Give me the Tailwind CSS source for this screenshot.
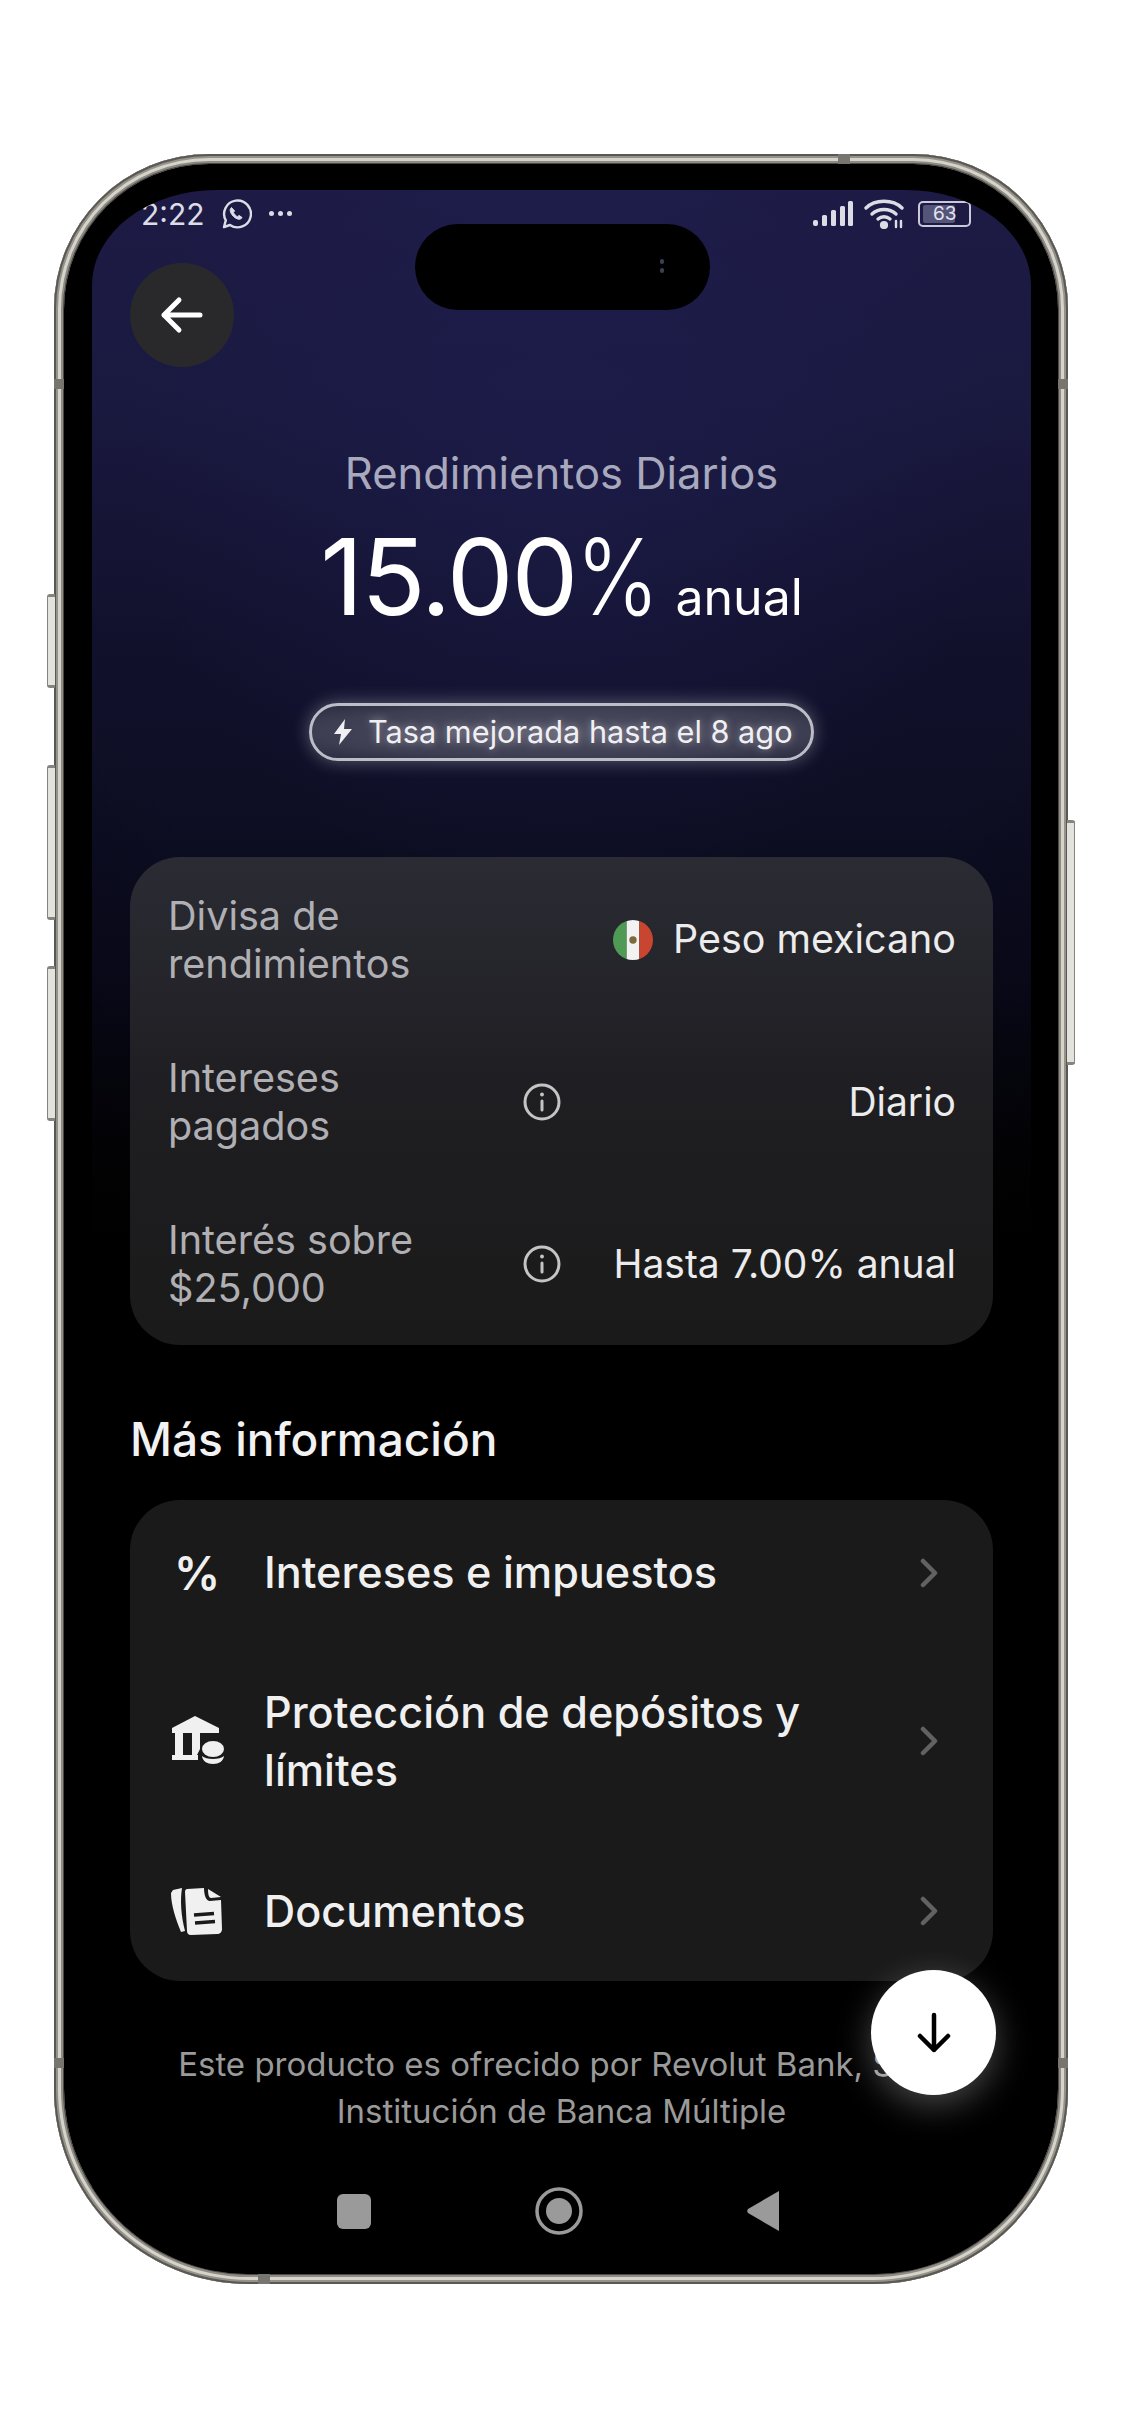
<!DOCTYPE html>
<html lang="es">

<head>
    <meta charset="UTF-8" />
    <meta name="viewport" content="width=device-width, initial-scale=1.0" />
    <title>Rendimientos Diarios</title>
    <script src="https://cdn.jsdelivr.net/npm/@tailwindcss/browser@4"></script>
</head>

<body class="bg-white font-['Inter','Noto_Sans',sans-serif]">
    <div class="w-[1125px] h-[2436px] pt-[154px] pl-[54px] overflow-hidden">
        <!-- Phone frame -->
        <div class="relative w-[1014px] h-[2130px] rounded-t-[155px] rounded-b-[195px] bg-[#d2cfc7] p-[10px] shadow-[inset_0_0_0_2px_#5a5853,inset_0_0_0_4px_#94928a,inset_0_0_0_7px_#d6d3cb,inset_0_0_0_9px_#8d8b83,inset_0_0_0_10px_#4a4945]">
            <!-- Side buttons -->
            <div class="absolute left-[-7px] top-[440px] w-[8px] h-[94px] rounded-l-[3px] bg-[#e4e2dc] border-l border-y-[3px] border-[#85837d]"></div>
            <div class="absolute left-[-7px] top-[611px] w-[8px] h-[155px] rounded-l-[3px] bg-[#e4e2dc] border-l border-y-[3px] border-[#85837d]"></div>
            <div class="absolute left-[-7px] top-[812px] w-[8px] h-[155px] rounded-l-[3px] bg-[#e4e2dc] border-l border-y-[3px] border-[#85837d]"></div>
            <div class="absolute right-[-7px] top-[666px] w-[8px] h-[245px] rounded-r-[3px] bg-[#e4e2dc] border-r border-y-[3px] border-[#85837d]"></div>

            <!-- Bezel -->
            <div class="relative w-full h-full rounded-t-[145px] rounded-b-[185px] bg-black px-[28px] pt-[26px] overflow-hidden">
                <!-- Screen -->
                <div class="relative w-[939px] h-[2084px] rounded-t-[125px_95px] overflow-hidden px-[38px] bg-[radial-gradient(ellipse_620px_640px_at_50%_260px,rgba(32,31,82,0.55)_0%,rgba(0,0,0,0)_70%),radial-gradient(ellipse_900px_900px_at_50%_300px,rgba(0,0,0,0)_55%,rgba(0,0,0,0.3)_100%),linear-gradient(180deg,#1d1b45_0px,#1a1940_200px,#12112d_440px,#0e0e24_620px,#09091a_800px,#030306_960px,#000_1050px,#000_100%)]">

                    <!-- Status bar -->
                    <div class="h-[47px] flex items-center justify-between text-[#dcdce6]">
                        <div class="flex items-center ml-[11px]">
                            <span class="text-[30px] leading-none">2:22</span>
                            <svg class="ml-[15px] w-[32px] h-[32px]" viewBox="0 0 32 32" fill="none" stroke="currentColor" stroke-width="2.4">
                                <path d="M4 29l1.8-6.6A13.4 13.4 0 1 1 10 27z" stroke-linejoin="round" />
                                <path d="M11.5 9.5c-1.5 1-1.8 3-.6 5.400 1.400 2.800 3.800 5 6.400 6 2.200.8 4 .2 4.800-1.300l-3-2.200-1.500 1.300c-1.700-.7-3.400-2.400-4.200-4.300l1.200-1.500z" fill="currentColor" stroke-width="1" />
                            </svg>
                            <div class="ml-[17px] flex gap-[4px]">
                                <span class="w-[5px] h-[5px] rounded-full bg-[#dcdce6]"></span>
                                <span class="w-[5px] h-[5px] rounded-full bg-[#dcdce6]"></span>
                                <span class="w-[5px] h-[5px] rounded-full bg-[#dcdce6]"></span>
                            </div>
                        </div>
                        <div class="flex items-center mr-[22px]">
                            <svg class="w-[40px] h-[26px]" viewBox="0 0 40 26" fill="currentColor">
                                <rect x="0" y="19" width="5" height="6" rx="2" />
                                <rect x="9" y="14" width="5" height="11" rx="1.500" />
                                <rect x="18" y="9" width="5" height="16" rx="1.500" />
                                <rect x="27" y="5" width="5" height="20" rx="1.500" />
                                <rect x="35" y="0" width="5" height="25" rx="1.500" />
                            </svg>
                            <svg class="ml-[11px] w-[40px] h-[30px]" viewBox="0 0 40 30" fill="none" stroke="currentColor" stroke-width="3.400" stroke-linecap="round">
                                <path d="M2 9C11 0 29 0 38 9" />
                                <path d="M8 15c6.500-6 17.500-6 24 0" />
                                <path d="M14 20c3.500-3 8.500-3 12 0" />
                                <circle cx="20" cy="26" r="2.400" fill="currentColor" />
                                <path d="M32 22v6M37 22v6" stroke-width="2.400" />
                            </svg>
                            <div class="ml-[14px] relative w-[53px] h-[26px] rounded-[5px] border-2 border-[#c9c9d8] flex items-center">
                                <div class="absolute left-[3px] top-[2px] bottom-[2px] w-[32px] bg-[#55557a] rounded-[2px]"></div>
                                <span class="relative ml-[13px] text-[19px] leading-none text-[#e4e4ee]">63</span>
                            </div>
                        </div>
                    </div>

                    <!-- Back -->
                    <button type="button" class="mt-[26px] w-[104px] h-[104px] rounded-full bg-[#29292c] flex items-center justify-center">
                        <svg class="w-[44px] h-[38px]" viewBox="0 0 44 38" fill="none" stroke="white" stroke-width="5" stroke-linecap="round" stroke-linejoin="round">
                            <path d="M4 19h36M19 4L4 19l15 15" />
                        </svg>
                    </button>

                    <!-- Camera island -->
                    <div class="absolute left-[323px] top-[34px] w-[295px] h-[86px] rounded-full bg-black">
                        <div class="absolute left-[245px] top-[35px] flex flex-col gap-[4px]">
                            <span class="w-[4px] h-[5px] rounded-full bg-[#3c4150]"></span>
                            <span class="w-[4px] h-[5px] rounded-full bg-[#3c4150]"></span>
                        </div>
                    </div>

                    <!-- Rate header -->
                    <div class="mt-[82px] text-center text-[43.500px] leading-[48px] text-[#a9a9bd] whitespace-nowrap">Rendimientos Diarios</div>
                    <div class="mt-[20px] h-[120px] flex items-baseline justify-center text-white">
                        <span class="text-[106px] leading-[120px] tracking-[-2px]">15.00</span>
                        <span class="w-[72px] text-[106px] leading-[120px] font-[350] origin-left scale-x-[0.84]">%</span>
                        <span class="ml-[27px] text-[50px] leading-none">anual</span>
                    </div>
                    <div class="mt-[66px] flex justify-center">
                        <div class="h-[58px] w-[505px] rounded-full border-[3px] border-[#bdbdc8] bg-[radial-gradient(ellipse_at_center,#505064_0%,#3e3e52_70%,#2c2c42_100%)] shadow-[0_0_18px_rgba(255,255,255,0.32)] flex items-center pl-[21px] text-[30.700px] text-[#f0f0f4] [text-shadow:0_0_8px_rgba(255,255,255,0.45)]">
                            <svg class="w-[20px] h-[26px] shrink-0" viewBox="0 0 20 26" fill="currentColor">
                                <path d="M12 0L1 15h7l-2 11 13-16h-8z" />
                            </svg>
                            <span class="ml-[15px] whitespace-nowrap">Tasa mejorada hasta el 8 ago</span>
                        </div>
                    </div>

                    <!-- Details card -->
                    <div class="mt-[96px] h-[488px] rounded-[50px] pt-[2px] pl-[38px] pr-[37px] bg-[linear-gradient(180deg,#2b2b34_0%,#1f1f23_45%,#1a1a1a_100%)]">
                        <div class="h-[162px] flex items-center justify-between">
                            <div class="text-[39.600px] leading-[48px] text-[#b0b0b4]">Divisa de<br>rendimientos</div>
                            <div class="flex items-center text-[39.400px] text-[#ececec]">
                                <svg class="w-[40px] h-[40px]" viewBox="0 0 38 38">
                                    <clipPath id="flagClip">
                                        <circle cx="19" cy="19" r="19" />
                                    </clipPath>
                                    <g clip-path="url(#flagClip)">
                                        <rect width="13" height="38" fill="#4f9a55" />
                                        <rect x="13" width="12" height="38" fill="#f2f2f2" />
                                        <rect x="25" width="13" height="38" fill="#c8452f" />
                                        <circle cx="19" cy="19" r="3.500" fill="#7d6a3c" />
                                    </g>
                                </svg>
                                <span class="ml-[20px]">Peso mexicano</span>
                            </div>
                        </div>
                        <div class="h-[162px] flex items-center">
                            <div class="w-[355px] text-[39.600px] leading-[48px] text-[#b0b0b4]">Intereses<br>pagados</div>
                            <svg class="w-[38px] h-[38px]" viewBox="0 0 38 38" fill="none" stroke="#c4c4c4" stroke-width="3" stroke-linecap="round">
                                <circle cx="19" cy="19" r="17" />
                                <path d="M19 18v9" />
                                <circle cx="19" cy="11.500" r="1.200" fill="#c4c4c4" stroke-width="1.500" />
                            </svg>
                            <div class="ml-auto text-[39px] text-[#ececec]">Diario</div>
                        </div>
                        <div class="h-[162px] flex items-center">
                            <div class="w-[355px] text-[39.600px] leading-[48px] text-[#b0b0b4]">Interés sobre<br>$25,000</div>
                            <svg class="w-[38px] h-[38px]" viewBox="0 0 38 38" fill="none" stroke="#c4c4c4" stroke-width="3" stroke-linecap="round">
                                <circle cx="19" cy="19" r="17" />
                                <path d="M19 18v9" />
                                <circle cx="19" cy="11.500" r="1.200" fill="#c4c4c4" stroke-width="1.500" />
                            </svg>
                            <div class="ml-auto text-[39px] text-[#ececec] whitespace-nowrap">Hasta 7.00% anual</div>
                        </div>
                    </div>

                    <!-- More info -->
                    <h2 class="mt-[66px] text-[46px] leading-[56px] font-medium text-[#f2f2f2]">Más información</h2>
                    <div class="mt-[33px] h-[481px] rounded-[50px] bg-[#1a1a1a] pl-[40px] pr-[55px] text-[43.200px] font-medium text-[#f0f0f0]">
                        <div class="h-[145px] flex items-center">
                            <span class="w-[94px] text-[46px] leading-none font-semibold pl-[4px]">%</span>
                            <span class="flex-1">Intereses e impuestos</span>
                            <svg class="w-[18px] h-[30px]" viewBox="0 0 18 30" fill="none" stroke="#626264" stroke-width="4.500" stroke-linecap="round" stroke-linejoin="round">
                                <path d="M3 3l12 12L3 27" />
                            </svg>
                        </div>
                        <div class="h-[192px] flex items-center">
                            <div class="w-[94px]">
                                <svg class="ml-[2px] w-[52px] h-[50px]" viewBox="0 0 52 50" fill="#f0f0f0">
                                    <path d="M23 0L47 12v5H0v-5z" />
                                    <path d="M3 17h8v22H3zM20 17h8v16l-3 6h-5z" />
                                    <path d="M0 39h26v5H0z" />
                                    <ellipse cx="41" cy="33" rx="11" ry="8" />
                                    <path d="M30 40c4 4 18 4 22 0-.5 5-5 8-11 8s-10.500-3-11-8z" />
                                </svg>
                            </div>
                            <span class="flex-1 leading-[58px]">Protección de depósitos y<br>límites</span>
                            <svg class="w-[18px] h-[30px]" viewBox="0 0 18 30" fill="none" stroke="#626264" stroke-width="4.500" stroke-linecap="round" stroke-linejoin="round">
                                <path d="M3 3l12 12L3 27" />
                            </svg>
                        </div>
                        <div class="h-[144px] pt-[4px] flex items-center">
                            <div class="w-[94px]">
                                <svg class="ml-[1px] w-[52px] h-[48px]" viewBox="0 0 52 48" fill="#f0f0f0">
                                    <path d="M2 3l9-2c-2 12-1 28 3 43l-4 1C5 33 0 18 0 6z" />
                                    <path d="M16 2l17-1c0 7 2 13 6 13l11-1 1 29c0 3-2 5-5 5l-26 1c-3 0-4-2-4-4L14 5c0-2 1-3 2-3z" />
                                    <path d="M37 2l13 8-10 1c-2 0-3-3-3-9z" />
                                    <path d="M23 28l20-1.500M24 36l20-1.500" stroke="#1a1a1a" stroke-width="3.500" />
                                </svg>
                            </div>
                            <span class="flex-1">Documentos</span>
                            <svg class="w-[18px] h-[30px]" viewBox="0 0 18 30" fill="none" stroke="#626264" stroke-width="4.500" stroke-linecap="round" stroke-linejoin="round">
                                <path d="M3 3l12 12L3 27" />
                            </svg>
                        </div>
                    </div>

                    <!-- Footer note -->
                    <p class="mt-[60px] text-center text-[33px] leading-[47px] text-[#9a9a9a] whitespace-nowrap">Este producto es ofrecido por Revolut Bank, S.A.,<br>Institución de Banca Múltiple</p>

                    <!-- Scroll down -->
                    <button type="button" class="absolute left-[779px] top-[1780px] w-[125px] h-[125px] rounded-full bg-white shadow-[0_10px_34px_rgba(255,255,255,0.28)] flex items-center justify-center">
                        <svg class="w-[36px] h-[42px]" viewBox="0 0 36 42" fill="none" stroke="black" stroke-width="4.500" stroke-linecap="round" stroke-linejoin="round">
                            <path d="M18 3v35M4 24l14 14 14-14" />
                        </svg>
                    </button>

                    <!-- Android nav -->
                    <div class="mt-[52px] h-[48px] pr-[8px] flex items-center justify-center gap-[164px]">
                        <div class="w-[34px] h-[35px] rounded-[6px] bg-[#9a9a9a]"></div>
                        <svg class="w-[48px] h-[48px]" viewBox="0 0 48 48">
                            <circle cx="24" cy="24" r="22" fill="none" stroke="#9a9a9a" stroke-width="3.500" />
                            <circle cx="24" cy="24" r="13" fill="#9a9a9a" />
                        </svg>
                        <svg class="w-[32px] h-[40px]" viewBox="0 0 32 40">
                            <path d="M32 0v40L1 22c-1-1-1-3 0-4z" fill="#9a9a9a" />
                        </svg>
                    </div>
                </div>
            </div>

            <!-- Antenna lines -->
            <div class="absolute left-[784px] top-0 w-[12px] h-[10px] bg-[#77756f]"></div>
            <div class="absolute left-[204px] bottom-0 w-[12px] h-[10px] bg-[#77756f]"></div>
            <div class="absolute left-0 top-[225px] w-[10px] h-[10px] bg-[#77756f]"></div>
            <div class="absolute right-0 top-[225px] w-[10px] h-[10px] bg-[#77756f]"></div>
            <div class="absolute left-0 top-[1904px] w-[10px] h-[10px] bg-[#77756f]"></div>
            <div class="absolute right-0 top-[1904px] w-[10px] h-[10px] bg-[#77756f]"></div>
        </div>
    </div>
</body>

</html>
